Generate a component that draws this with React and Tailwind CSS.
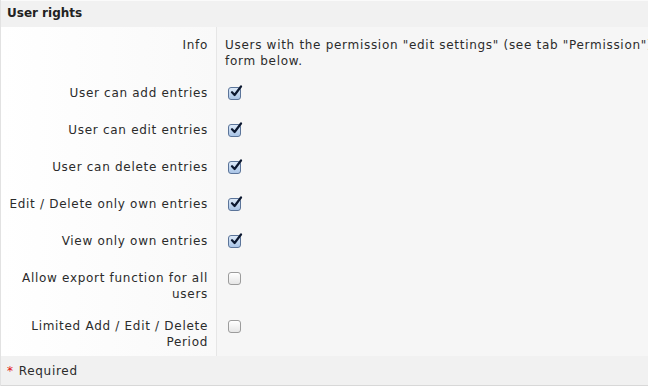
import React from 'react';

const rows = [
  { label: 'User can add entries', checked: true },
  { label: 'User can edit entries', checked: true },
  { label: 'User can delete entries', checked: true },
  { label: 'Edit / Delete only own entries', checked: true },
  { label: 'View only own entries', checked: true },
  { label: 'Allow export function for all users', checked: false },
  { label: 'Limited Add / Edit / Delete Period', checked: false },
];

function Box({ checked }) {
  if (!checked) {
    return (
      <div className="mt-[2px] ml-[3px] w-[13px] h-[13px] rounded-[3px] border border-[#9c9c9c] bg-gradient-to-b from-white to-[#e6e6e6] shadow-[inset_0_1px_0_#fff]" />
    );
  }
  return (
    <div className="relative mt-[2px] ml-[3px] w-[13px] h-[13px] rounded-[3px] border border-[#5b7499] bg-gradient-to-b from-[#dce9f8] to-[#a9c4e6]">
      <svg className="absolute left-[1px] top-[-3px]" width="13" height="13" viewBox="0 0 13 13">
        <path d="M2 7.2 L4.6 10 L11 1.5" fill="none" stroke="#0c1830" strokeWidth="2.2" strokeLinecap="round" strokeLinejoin="round" />
      </svg>
    </div>
  );
}

export default function App() {
  return (
    <div className="w-[648px] h-[388px] overflow-hidden bg-white text-[12px] leading-[16px] tracking-[0.7px] text-[#2b2b2b]" style={{ fontFamily: '"DejaVu Sans", Verdana, sans-serif' }}>
      <div className="w-[648px] border-l border-[#e2e2e2]">
        <div className="h-[27px] bg-[#f1f1f1] border-t border-[#fafafa] px-[6px] pt-[4px] font-bold tracking-normal text-[#222]">User rights</div>

        <div className="flex">
          <div className="w-[216px] shrink-0 text-right pl-[8px] pr-[8px] pt-[10px] pb-[6px] bg-gradient-to-r from-white to-[#f9f9f9] border-r border-[#e6e6e6]">Info</div>
          <div className="flex-1 min-w-0 overflow-hidden bg-[#f6f6f6] pl-[8px] pt-[10px] pb-[6px] whitespace-nowrap">
            Users with the permission "edit settings" (see tab "Permission")
            <br />
            form below.
          </div>
        </div>

        {rows.map((r) => (
          <div key={r.label} className="flex">
            <div className="w-[216px] shrink-0 text-right pl-[8px] pr-[8px] pt-[10px] pb-[6px] min-h-[37px] bg-gradient-to-r from-white to-[#f9f9f9] border-r border-[#e6e6e6]">
              {r.label}
            </div>
            <div className="flex-1 bg-[#f6f6f6] pl-[8px] pt-[10px] pb-[6px]">
              <Box checked={r.checked} />
            </div>
          </div>
        ))}

        <div className="h-[30px] bg-[#f1f1f1] border-b border-[#d8d8d8] pl-[6px] pt-[7px] flex">
          <span className="text-[#e01010] mr-[5px]">*</span>
          <span>Required</span>
        </div>
      </div>
    </div>
  );
}
